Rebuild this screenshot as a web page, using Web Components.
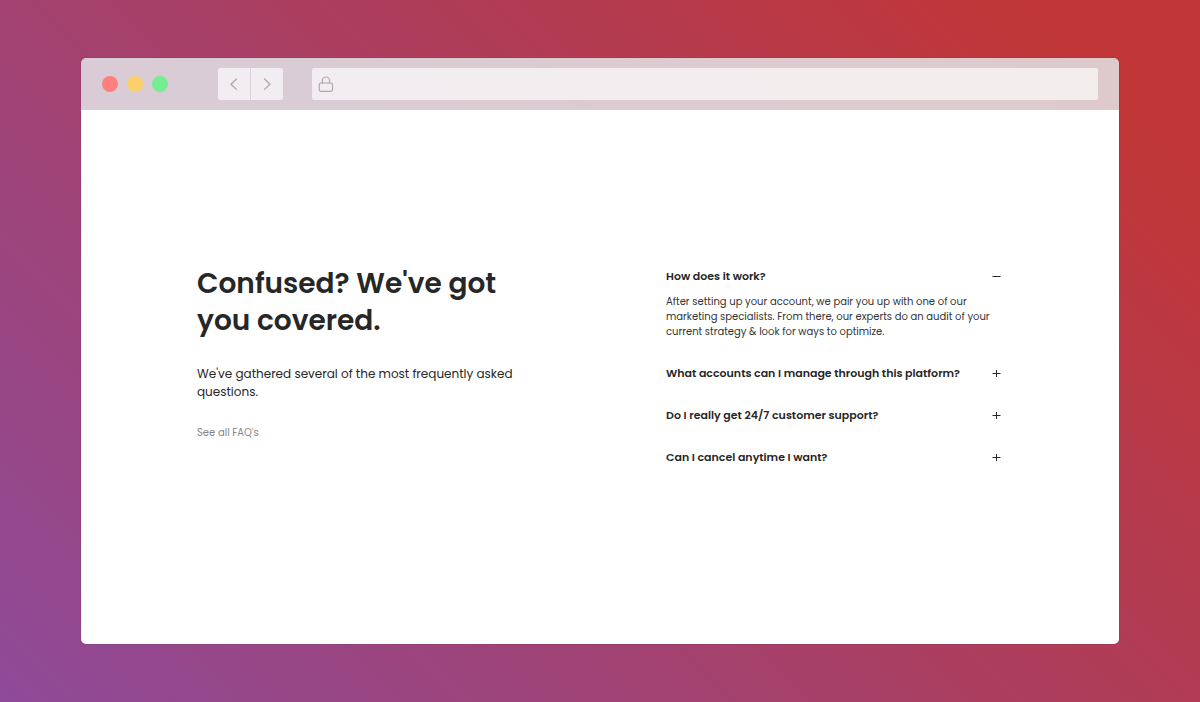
<!DOCTYPE html>
<html lang="en">
<head>
<meta charset="utf-8">
<meta name="viewport" content="width=device-width, initial-scale=1">
<title>Frequently asked questions</title>
<style>
  body {
    margin: 0;
    font-family: Poppins, Inter, sans-serif;
    color: #272727;
    background: linear-gradient(45deg, #8e4a98 0%, #c03637 90%) no-repeat;
  }
</style>
</head>
<body>
<browser-window>
  <faq-section>
    <h1 slot="title">Confused? We've got you covered.</h1>
    <p slot="lead">We've gathered several of the most frequently asked questions.</p>
    <a slot="more" href="#all">See all FAQ's</a>
    <faq-item question="How does it work?" open>After setting up your account, we pair you up with one of our marketing specialists. From there, our experts do an audit of your current strategy &amp; look for ways to optimize.</faq-item>
    <faq-item question="What accounts can I manage through this platform?"></faq-item>
    <faq-item question="Do I really get 24/7 customer support?"></faq-item>
    <faq-item question="Can I cancel anytime I want?"></faq-item>
  </faq-section>
</browser-window>

<script>
class BrowserToolbar extends HTMLElement {
  constructor() {
    super();
    this.attachShadow({ mode: "open" }).innerHTML = `
      <style>
        :host { display: flex; align-items: center; box-sizing: border-box; height: 52px; padding: 0 21px;
          background: rgba(228, 231, 234, .84); }
        .lights { display: flex; gap: 9px; margin-right: 50px; }
        .lights i { width: 16px; height: 16px; border-radius: 50%; }
        .red { background: #ff817d; }
        .amber { background: #fdd06c; }
        .green { background: #77ed93; }
        nav { display: flex; gap: 1px; margin-right: 29px; }
        button { display: grid; place-items: center; width: 32px; height: 32px; padding: 0; border: 0;
          background: rgba(255, 255, 255, .65); }
        button:first-child { border-radius: 2px 0 0 2px; }
        button:last-child { border-radius: 0 2px 2px 0; }
        svg { display: block; fill: none; stroke: #aea6ad; stroke-linecap: round; stroke-linejoin: round; }
        .address { flex: 1; display: flex; align-items: center; box-sizing: border-box; height: 32px;
          padding: 0 6px; border-radius: 2px; background: rgba(255, 255, 255, .65); }
        input { flex: 1; min-width: 0; border: 0; outline: 0; background: none; font: inherit; font-size: 12px; }
      </style>
      <div class="lights"><i class="red"></i><i class="amber"></i><i class="green"></i></div>
      <nav aria-label="History">
        <button aria-label="Back"><svg width="16" height="16" viewBox="0 0 16 16" stroke-width="1.3"><path d="M10.500 3 5 8.200l5.500 5.200"/></svg></button>
        <button aria-label="Forward"><svg width="16" height="16" viewBox="0 0 16 16" stroke-width="1.3"><path d="M5.500 3 11 8.200l-5.500 5.200"/></svg></button>
      </nav>
      <label class="address">
        <svg width="16" height="16" viewBox="0 0 16 16" stroke-width="1.2"><rect x="1.300" y="7" width="13.200" height="8.300" rx="1.500"/><path d="M4.300 7V4.600a3.600 3.600 0 0 1 7.200 0V7"/></svg>
        <input type="text" aria-label="Address">
      </label>`;
  }
}
customElements.define("browser-toolbar", BrowserToolbar);

class BrowserWindow extends HTMLElement {
  constructor() {
    super();
    this.attachShadow({ mode: "open" }).innerHTML = `
      <style>
        :host { display: flex; box-sizing: border-box; min-height: 100vh; padding: 58px 81px; }
        .frame { flex: 1; display: flex; flex-direction: column; border-radius: 5px; overflow: hidden;
          box-shadow: 0 0 1px rgba(0, 0, 0, .5); }
        main { flex: 1; display: grid; align-items: center; padding: 32px 118px 32px 116px; background: #fff; }
      </style>
      <div class="frame">
        <browser-toolbar></browser-toolbar>
        <main><slot></slot></main>
      </div>`;
  }
}
customElements.define("browser-window", BrowserWindow);

class FaqSection extends HTMLElement {
  constructor() {
    super();
    this.attachShadow({ mode: "open" }).innerHTML = `
      <style>
        :host { display: grid; grid-template-columns: 1fr 1fr; gap: 134px; }
        ::slotted(h1) { margin: 0 0 26px; font-size: 28px; line-height: 37px; font-weight: 600; }
        ::slotted(p) { margin: 0 0 24px; font-size: 12px; line-height: 18px; }
        ::slotted(a) { display: block; font-size: 10px; line-height: 16px; color: #868686; text-decoration: none; }
        .list { display: grid; gap: 26px; align-content: start; padding: 3px 0 24px; }
      </style>
      <div><slot name="title"></slot><slot name="lead"></slot><slot name="more"></slot></div>
      <div class="list"><slot></slot></div>`;
  }
}
customElements.define("faq-section", FaqSection);

class FaqItem extends HTMLElement {
  constructor() {
    super();
    this.attachShadow({ mode: "open" }).innerHTML = `
      <style>
        :host { display: block; }
        button { display: flex; align-items: center; justify-content: space-between; width: 100%; padding: 0;
          border: 0; background: none; color: inherit; text-align: left; cursor: pointer;
          font: inherit; font-size: 11px; line-height: 16px; font-weight: 600; }
        svg { flex: none; stroke: #272727; stroke-width: 1; }
        .answer { padding-top: 10px; font-size: 10px; line-height: 15px; color: #333; }
        .answer[hidden] { display: none; }
      </style>
      <button aria-controls="answer"><span></span>
        <svg width="9" height="9" viewBox="0 0 9 9" aria-hidden="true"><path d="M.5 4.500h8"/><path class="bar" d="M4.500 1v7"/></svg>
      </button>
      <div class="answer" id="answer"><slot></slot></div>`;
    this.shadowRoot.querySelector("button").addEventListener("click", () => this.toggleAttribute("open"));
  }
  static get observedAttributes() { return ["open", "question"]; }
  connectedCallback() { this.render(); }
  attributeChangedCallback() { this.render(); }
  render() {
    const root = this.shadowRoot;
    const open = this.hasAttribute("open");
    root.querySelector("span").textContent = this.getAttribute("question");
    root.querySelector("button").setAttribute("aria-expanded", String(open));
    root.querySelector(".bar").style.display = open ? "none" : "";
    root.querySelector(".answer").hidden = !open;
  }
}
customElements.define("faq-item", FaqItem);
</script>
</body>
</html>
